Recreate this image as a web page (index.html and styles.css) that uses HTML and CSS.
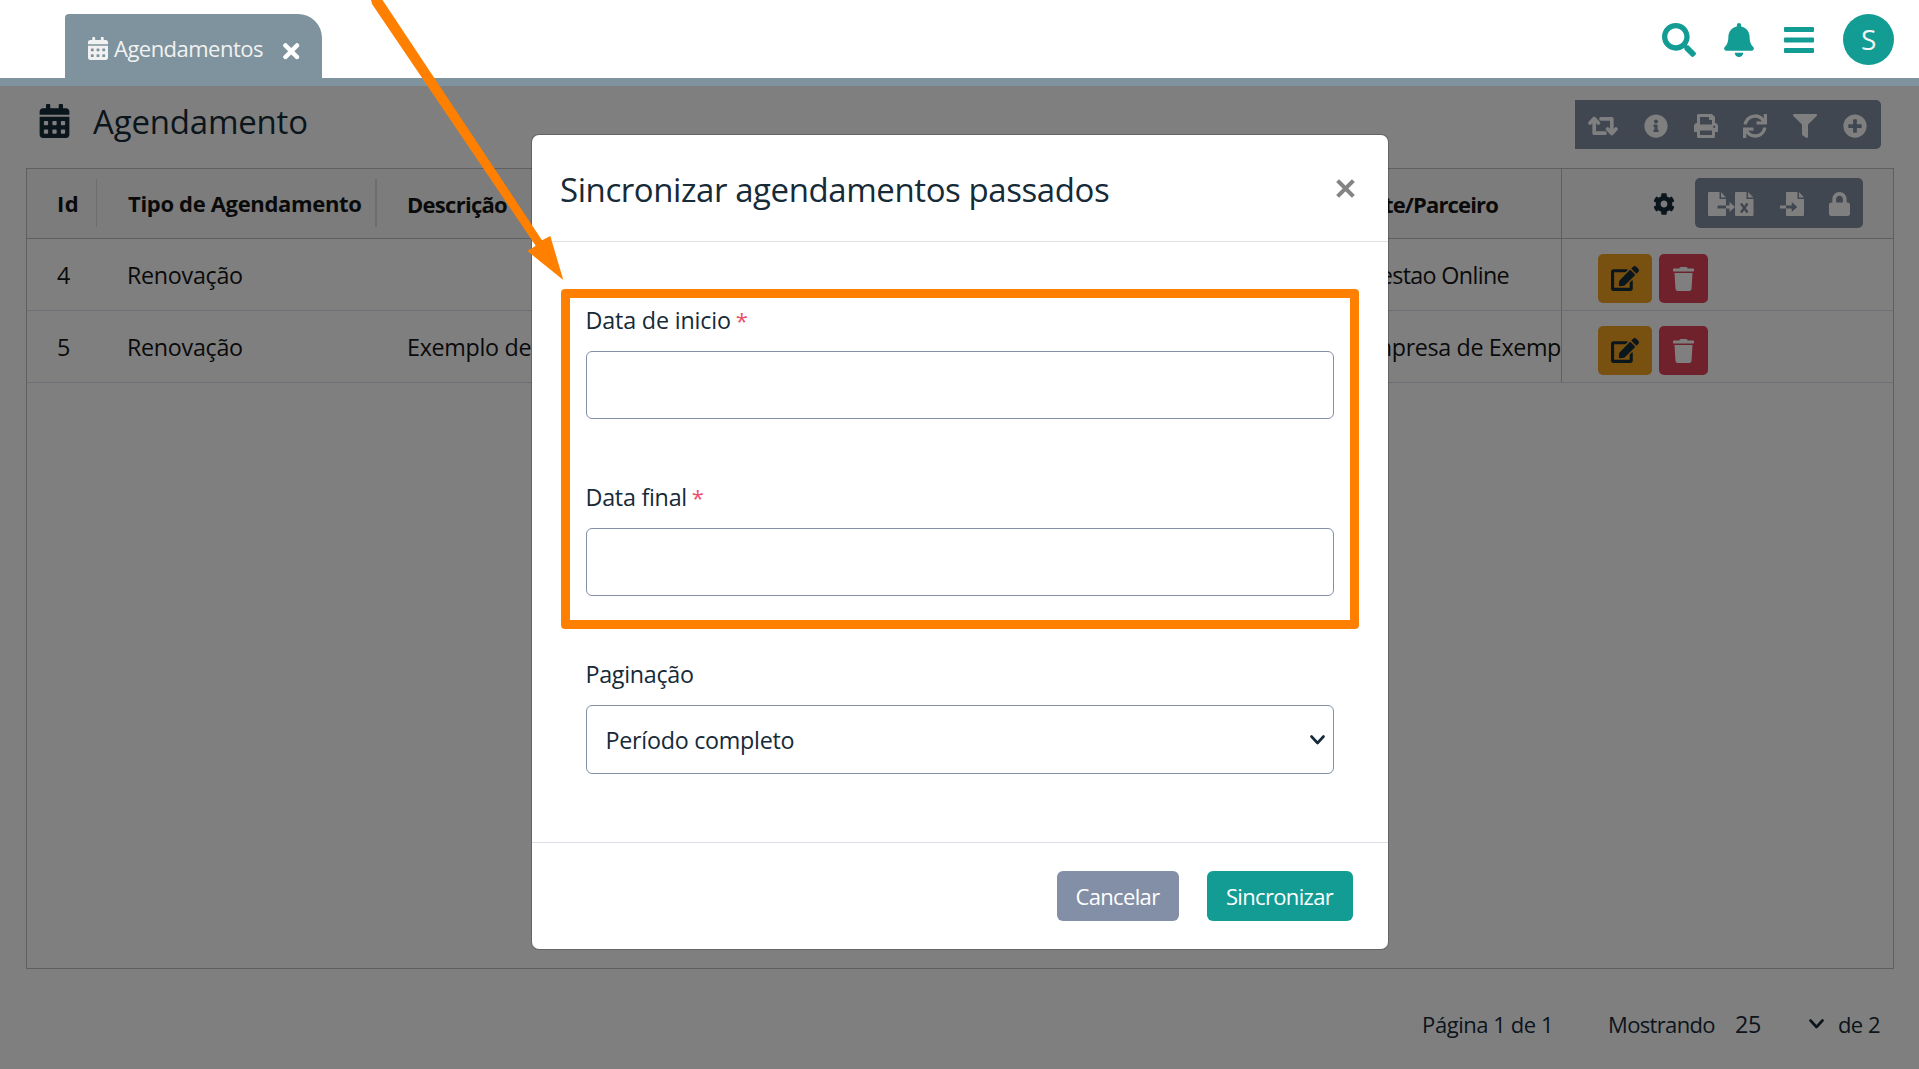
FILE: index.html
```html
<!DOCTYPE html>
<html lang="pt-BR">
<head>
<meta charset="utf-8">
<title>Agendamentos</title>
<link rel="stylesheet" href="styles.css">
</head>
<body>
<svg class="defs" aria-hidden="true">
  <symbol id="i-calendar" viewBox="0 0 448 512"><path d="M0 464c0 26.500 21.500 48 48 48h352c26.500 0 48-21.500 48-48V192H0v272zm320-196c0-6.600 5.400-12 12-12h40c6.600 0 12 5.400 12 12v40c0 6.600-5.400 12-12 12h-40c-6.600 0-12-5.400-12-12v-40zm0 128c0-6.600 5.400-12 12-12h40c6.600 0 12 5.400 12 12v40c0 6.600-5.400 12-12 12h-40c-6.600 0-12-5.400-12-12v-40zM192 268c0-6.600 5.400-12 12-12h40c6.600 0 12 5.400 12 12v40c0 6.600-5.400 12-12 12h-40c-6.600 0-12-5.400-12-12v-40zm0 128c0-6.600 5.400-12 12-12h40c6.600 0 12 5.400 12 12v40c0 6.600-5.400 12-12 12h-40c-6.600 0-12-5.400-12-12v-40zM64 268c0-6.600 5.400-12 12-12h40c6.600 0 12 5.400 12 12v40c0 6.600-5.400 12-12 12H76c-6.600 0-12-5.400-12-12v-40zm0 128c0-6.600 5.400-12 12-12h40c6.600 0 12 5.400 12 12v40c0 6.600-5.400 12-12 12H76c-6.600 0-12-5.400-12-12v-40zM400 64h-48V16c0-8.800-7.200-16-16-16h-32c-8.800 0-16 7.200-16 16v48H160V16c0-8.800-7.200-16-16-16h-32c-8.800 0-16 7.200-16 16v48H48C21.500 64 0 85.500 0 112v48h448v-48c0-26.500-21.500-48-48-48z"/></symbol>
  <symbol id="i-times" viewBox="0 80 352 352"><path d="M242.720 256l100.070-100.070c12.280-12.280 12.280-32.190 0-44.480l-22.240-22.240c-12.280-12.280-32.190-12.280-44.480 0L176 189.280 75.930 89.210c-12.280-12.280-32.190-12.280-44.480 0L9.210 111.450c-12.280 12.280-12.280 32.190 0 44.480L109.280 256 9.210 356.070c-12.280 12.280-12.280 32.190 0 44.480l22.240 22.240c12.280 12.280 32.200 12.280 44.480 0L176 322.720l100.070 100.070c12.280 12.280 32.200 12.280 44.480 0l22.240-22.240c12.280-12.280 12.280-32.190 0-44.480L242.720 256z"/></symbol>
  <symbol id="i-edit" viewBox="0 0 576 512"><path d="M402.600 83.200l90.200 90.200c3.800 3.800 3.800 10 0 13.800L274.400 405.600l-92.800 10.300c-12.400 1.400-22.900-9.100-21.500-21.500l10.300-92.800L388.800 83.200c3.800-3.800 10-3.800 13.800 0zm162-22.900l-48.800-48.800c-15.200-15.200-39.900-15.200-55.200 0l-35.400 35.400c-3.800 3.800-3.800 10 0 13.800l90.200 90.200c3.800 3.800 10 3.800 13.800 0l35.400-35.400c15.200-15.300 15.200-40 0-55.200zM384 346.200V448H64V128h229.800c3.200 0 6.200-1.300 8.500-3.500l40-40c7.600-7.600 2.200-20.500-8.500-20.500H48C21.500 64 0 85.500 0 112v352c0 26.500 21.500 48 48 48h352c26.500 0 48-21.500 48-48V306.200c0-10.700-12.900-16-20.500-8.500l-40 40c-2.200 2.300-3.500 5.300-3.500 8.500z"/></symbol>
  <symbol id="i-trash" viewBox="0 0 448 512"><path d="M432 32H312l-9.400-18.700A24 24 0 0 0 281.100 0H166.800a23.720 23.720 0 0 0-21.400 13.300L136 32H16A16 16 0 0 0 0 48v32a16 16 0 0 0 16 16h416a16 16 0 0 0 16-16V48a16 16 0 0 0-16-16zM53.200 467a48 48 0 0 0 47.900 45h245.800a48 48 0 0 0 47.900-45L416 128H32z"/></symbol>
</svg>

<header class="topbar">
  <div class="tab">
    <svg class="tab-icon"><use href="#i-calendar"/></svg>
    <span class="tab-label">Agendamentos</span>
    <svg class="tab-close"><use href="#i-times"/></svg>
  </div>
  <nav class="top-actions">
    <svg class="ico-search" viewBox="0 0 512 512"><path d="M505 442.700L405.300 343c-4.500-4.500-10.600-7-17-7H372c27.600-35.300 44-79.700 44-128C416 93.100 322.900 0 208 0S0 93.100 0 208s93.100 208 208 208c48.300 0 92.700-16.400 128-44v16.300c0 6.400 2.500 12.500 7 17l99.700 99.700c9.400 9.400 24.600 9.400 33.900 0l28.300-28.300c9.400-9.400 9.400-24.600.1-34zM208 336c-70.700 0-128-57.200-128-128 0-70.700 57.200-128 128-128 70.700 0 128 57.200 128 128 0 70.700-57.200 128-128 128z"/></svg>
    <svg class="ico-bell" viewBox="0 0 448 512"><path d="M224 512c35.320 0 63.970-28.650 63.970-64H160.030c0 35.350 28.650 64 63.970 64zm215.390-149.710c-19.320-20.760-55.470-51.990-55.470-154.290 0-77.700-54.480-139.900-127.940-155.160V32c0-17.670-14.320-32-31.980-32s-31.980 14.330-31.980 32v20.840C118.560 68.100 64.080 130.300 64.080 208c0 102.300-36.150 133.530-55.470 154.290-6 6.450-8.660 14.160-8.610 21.710.11 16.400 12.980 32 32.100 32h383.800c19.120 0 32-15.600 32.100-32 .05-7.550-2.610-15.270-8.610-21.710z"/></svg>
    <svg class="ico-bars" viewBox="0 0 30 26"><path d="M1 0h28a1 1 0 0 1 1 1v3a1 1 0 0 1-1 1H1a1 1 0 0 1-1-1V1a1 1 0 0 1 1-1zM1 10.500h28a1 1 0 0 1 1 1v3a1 1 0 0 1-1 1H1a1 1 0 0 1-1-1v-3a1 1 0 0 1 1-1zM1 21h28a1 1 0 0 1 1 1v3a1 1 0 0 1-1 1H1a1 1 0 0 1-1-1v-3a1 1 0 0 1 1-1z"/></svg>
    <span class="avatar">S</span>
  </nav>
</header>

<main class="page">
  <div class="page-head">
    <h1 class="page-title"><svg class="title-icon"><use href="#i-calendar"/></svg><span class="title-text">Agendamento</span></h1>
    <div class="toolbar">
      <svg class="t-retweet" viewBox="0 0 30 20"><g fill="none" stroke="currentColor" stroke-width="3.700" stroke-linecap="round" stroke-linejoin="round"><path d="M2 7l4.200-4.500L10.400 7M6.200 3.500v13.700H17"/><path d="M28 13l-4.200 4.500L19.600 13M23.800 16.500V2.800H13"/></g></svg>
      <svg class="t24" viewBox="0 0 512 512"><path d="M256 8C119.043 8 8 119.083 8 256c0 136.997 111.043 248 248 248s248-111.003 248-248C504 119.083 392.957 8 256 8zm0 110c23.196 0 42 18.804 42 42s-18.804 42-42 42-42-18.804-42-42 18.804-42 42-42zm56 254c0 6.627-5.373 12-12 12h-88c-6.627 0-12-5.373-12-12v-24c0-6.627 5.373-12 12-12h12v-64h-12c-6.627 0-12-5.373-12-12v-24c0-6.627 5.373-12 12-12h64c6.627 0 12 5.373 12 12v100h12c6.627 0 12 5.373 12 12v24z"/></svg>
      <svg class="t24" viewBox="0 0 512 512"><path d="M448 192V77.250c0-8.490-3.370-16.620-9.370-22.630L393.370 9.370c-6-6-14.140-9.370-22.630-9.370H96C78.330 0 64 14.330 64 32v160c-35.350 0-64 28.650-64 64v112c0 8.840 7.160 16 16 16h48v96c0 17.670 14.330 32 32 32h320c17.670 0 32-14.330 32-32v-96h48c8.840 0 16-7.160 16-16V256c0-35.350-28.650-64-64-64zm-64 256H128v-96h256v96zm0-224H128V64h192v48c0 8.840 7.160 16 16 16h48v96zm48 72c-13.250 0-24-10.750-24-24 0-13.260 10.750-24 24-24s24 10.740 24 24c0 13.250-10.750 24-24 24z"/></svg>
      <svg class="t24" viewBox="0 0 512 512"><path d="M440.650 12.570l4 82.770A247.160 247.160 0 0 0 255.830 8C134.730 8 33.910 94.920 12.290 209.820A12 12 0 0 0 24.090 224h49.050a12 12 0 0 0 11.670-9.260 175.910 175.910 0 0 1 317-56.940l-101.460-4.860a12 12 0 0 0-12.570 12v47.410a12 12 0 0 0 12 12H500a12 12 0 0 0 12-12V12a12 12 0 0 0-12-12h-47.370a12 12 0 0 0-11.980 12.570zM255.830 432a175.610 175.610 0 0 1-146-77.800l101.800 4.870a12 12 0 0 0 12.570-12v-47.400a12 12 0 0 0-12-12H12a12 12 0 0 0-12 12V500a12 12 0 0 0 12 12h47.350a12 12 0 0 0 12-12.600l-4.150-82.570A247.170 247.170 0 0 0 255.830 504c121.110 0 221.930-86.920 243.550-201.820a12 12 0 0 0-11.800-14.180h-49.050a12 12 0 0 0-11.670 9.260A175.860 175.860 0 0 1 255.830 432z"/></svg>
      <svg class="t24" viewBox="0 0 512 512"><path d="M487.976 0H24.028C2.710 0-8.047 25.866 7.058 40.971L192 225.941V432c0 7.831 3.821 15.170 10.237 19.662l80 55.980C298.020 518.690 320 507.493 320 487.980V225.941l184.947-184.970C520.021 25.896 509.338 0 487.976 0z"/></svg>
      <svg class="t24" viewBox="0 0 512 512"><path d="M256 8C119 8 8 119 8 256s111 248 248 248 248-111 248-248S393 8 256 8zm144 276c0 6.600-5.400 12-12 12h-92v92c0 6.600-5.400 12-12 12h-56c-6.600 0-12-5.400-12-12v-92h-92c-6.600 0-12-5.400-12-12v-56c0-6.600 5.400-12 12-12h92v-92c0-6.600 5.400-12 12-12h56c6.600 0 12 5.400 12 12v92h92c6.600 0 12 5.400 12 12v56z"/></svg>
    </div>
  </div>

  <section class="table">
    <div class="row head">
      <div class="cell c-id"><span class="h-id">Id</span></div>
      <div class="cell c-type"><span class="h-type">Tipo de Agendamento</span></div>
      <div class="cell c-desc"><span class="h-desc">Descrição</span></div>
      <div class="cell c-client h-client">Cliente/Parceiro</div>
      <div class="cell c-actions">
        <svg class="gear" viewBox="0 0 512 512"><path d="M487.400 315.700l-42.600-24.600c4.300-23.200 4.300-47 0-70.200l42.600-24.600c4.900-2.800 7.100-8.600 5.500-14-11.100-35.600-30-67.800-54.700-94.600-3.800-4.100-10-5.100-14.800-2.300L380.800 110c-17.900-15.400-38.500-27.300-60.800-35.100V25.800c0-5.600-3.900-10.500-9.400-11.700-36.700-8.200-74.300-7.800-109.200 0-5.500 1.200-9.400 6.100-9.400 11.700V75c-22.200 7.900-42.800 19.800-60.800 35.100L88.700 85.500c-4.900-2.800-11-1.900-14.800 2.300-24.700 26.700-43.600 58.900-54.700 94.600-1.700 5.400.6 11.200 5.500 14L67.300 221c-4.300 23.200-4.300 47 0 70.200l-42.600 24.600c-4.900 2.800-7.100 8.600-5.500 14 11.100 35.600 30 67.800 54.700 94.600 3.800 4.100 10 5.100 14.800 2.300l42.600-24.600c17.900 15.400 38.500 27.300 60.800 35.100v49.200c0 5.600 3.900 10.500 9.400 11.700 36.700 8.200 74.300 7.800 109.200 0 5.500-1.200 9.400-6.100 9.400-11.700v-49.200c22.200-7.900 42.800-19.800 60.800-35.100l42.600 24.600c4.900 2.800 11 1.900 14.800-2.300 24.700-26.700 43.600-58.900 54.700-94.600 1.500-5.500-.7-11.300-5.600-14.100zM256 336c-44.100 0-80-35.900-80-80s35.900-80 80-80 80 35.900 80 80-35.900 80-80 80z"/></svg>
        <div class="file-tools">
          <svg class="f-export" viewBox="0 0 46 24"><path d="M1 0h10.500v7H18v6.500H9.500v3H18V23a1 1 0 0 1-1 1H1a1 1 0 0 1-1-1V1a1 1 0 0 1 1-1zM13 0l5 5.500h-5zM18 13.500h3.500V10L27 15l-5.500 5v-3.500H18zM28 0h10.500v7H45.500v16a1 1 0 0 1-1 1H28a1 1 0 0 1-1-1V1a1 1 0 0 1 1-1zM40 0l5.500 5.500H40z"/><path class="cut" d="M33 11.500l6.500 9M39.500 11.500l-6.500 9"/></svg>
          <svg class="t24" viewBox="0 0 24 24"><path d="M7 0h10.500v7H24v16a1 1 0 0 1-1 1H7a1 1 0 0 1-1-1v-6.500h5.700V20l5.600-5-5.600-5v3.500H6V1a1 1 0 0 1 1-1zM19 0l5 5.500h-5zM.7 13.500H6v3H.7A.7.7 0 0 1 0 15.800v-1.600a.7.7 0 0 1 .7-.7z"/></svg>
          <svg class="f-lock" viewBox="0 0 448 512"><path d="M400 224h-24v-72C376 68.200 307.800 0 224 0S72 68.200 72 152v72H48c-26.500 0-48 21.500-48 48v192c0 26.500 21.500 48 48 48h352c26.500 0 48-21.500 48-48V272c0-26.500-21.500-48-48-48zm-104 0H152v-72c0-39.700 32.300-72 72-72s72 32.300 72 72v72z"/></svg>
        </div>
      </div>
    </div>
    <div class="row">
      <div class="cell c-id">4</div>
      <div class="cell c-type">Renovação</div>
      <div class="cell c-desc"></div>
      <div class="cell c-client v-first">Gestao Online</div>
      <div class="cell c-actions">
        <button class="btn-edit"><svg class="e-icon"><use href="#i-edit"/></svg></button>
        <button class="btn-del"><svg class="d-icon"><use href="#i-trash"/></svg></button>
      </div>
    </div>
    <div class="row">
      <div class="cell c-id">5</div>
      <div class="cell c-type">Renovação</div>
      <div class="cell c-desc">Exemplo de</div>
      <div class="cell c-client v-second">Empresa de Exemp</div>
      <div class="cell c-actions">
        <button class="btn-edit"><svg class="e-icon"><use href="#i-edit"/></svg></button>
        <button class="btn-del"><svg class="d-icon"><use href="#i-trash"/></svg></button>
      </div>
    </div>
  </section>

  <footer class="pager">
    <span class="p-page">Página 1 de 1</span>
    <span class="p-show">Mostrando</span>
    <span class="p-size">25</span>
    <svg class="p-chev" viewBox="0 0 15 10"><path d="M1.500 1.500l6 6.500 6-6.500"/></svg>
    <span class="p-total">de 2</span>
  </footer>
</main>

<div class="backdrop"></div>

<div class="modal">
  <div class="modal-head">
    <h2 class="modal-title">Sincronizar agendamentos passados</h2>
    <svg class="modal-close" viewBox="0 0 20 20"><path d="M1.700 1.700l16.600 16.600M18.300 1.700L1.700 18.300"/></svg>
  </div>
  <div class="modal-body">
    <div class="field">
      <label class="l-start">Data de inicio <span class="req">*</span></label>
      <div class="input"></div>
    </div>
    <div class="field">
      <label class="l-end">Data final <span class="req">*</span></label>
      <div class="input"></div>
    </div>
    <div class="field">
      <label class="l-page">Paginação</label>
      <div class="input select"><span>Período completo</span><svg class="chev" viewBox="0 0 15 10"><path d="M1.500 1.500l6 6.500 6-6.500"/></svg></div>
    </div>
  </div>
  <div class="modal-foot">
    <button class="btn cancel">Cancelar</button>
    <button class="btn sync">Sincronizar</button>
  </div>
</div>

<div class="highlight"></div>
<svg class="arrow" viewBox="0 0 600 300"><path d="M371 0H382.500L542 240.300 550.300 236 563.300 280 527.300 251 535.700 245.700 372 4Z"/></svg>
</body>
</html>
```
FILE: styles.css
```css
* { box-sizing: border-box; }
body {
  margin: 0;
  width: 1919px;
  height: 1069px;
  position: relative;
  overflow: hidden;
  background: #fff;
  color: #162a38;
  font-family: "Open Sans", "Noto Sans", sans-serif;
  font-size: 23.3px;
  letter-spacing: -0.3px;
  line-height: 34px;
  white-space: nowrap;
}
svg { display: block; flex: none; fill: currentColor; }
.defs { position: absolute; width: 0; height: 0; }
h1, h2 { margin: 0; font-weight: 400; }
button { border: 0; padding: 0; font: inherit; }

.topbar {
  display: flex;
  justify-content: space-between;
  align-items: flex-end;
  height: 86px;
  border-bottom: 8px solid #7e939d;
  padding: 0 25px 0 65px;
}
.tab {
  display: flex;
  align-items: center;
  width: 257px;
  height: 64px;
  padding: 5px 0 0 23px;
  border-radius: 4px 24px 0 0;
  background: #7e939d;
  color: #f1f1f1;
  font-size: 22px;
  letter-spacing: -0.52px;
}
.tab-icon { width: 20px; height: 23px; margin-right: 6px; }
.tab-label { width: 169px; padding-bottom: 2px; }
.tab-close { width: 16.5px; height: 16.5px; margin-top: 6px; color: #fff; }
.top-actions {
  display: flex;
  align-items: center;
  height: 77px;
  align-self: flex-start;
  padding-top: 3px;
  color: #129c94;
}
.ico-search { width: 34px; height: 34px; margin-right: 28px; }
.ico-bell { width: 30px; height: 34px; margin-right: 30px; }
.ico-bars { width: 30px; height: 26px; margin-right: 29px; }
.avatar {
  width: 51px;
  height: 51px;
  margin-bottom: 2px;
  border-radius: 50%;
  background: #129c94;
  color: #f4f4f4;
  font-size: 28px;
  line-height: 51px;
  text-align: center;
}

.page-head {
  display: flex;
  justify-content: space-between;
  height: 82px;
  padding: 0 38px 0 39px;
}
.page-title {
  display: flex;
  align-items: center;
  height: 70px;
  font-size: 33px;
  letter-spacing: -0.2px;
}
.title-icon { width: 31px; height: 34px; margin-right: 23px; }
.title-text { padding-top: 2px; }
.toolbar {
  display: flex;
  align-items: center;
  gap: 25.8px;
  width: 306px;
  height: 49px;
  margin-top: 14px;
  padding: 2px 0 0 13px;
  border-radius: 0 5px 5px 0;
  background: #808ea2;
  color: #fff;
}
.t24 { width: 24px; height: 24px; }
.t-retweet { width: 30px; height: 20px; }

.table {
  height: 801px;
  margin: 0 25px 0 26px;
  border: 1px solid #bcbec2;
}
.row {
  display: grid;
  grid-template-columns: 70px 280px 900px 284px 1fr;
  height: 72px;
  border-bottom: 1px solid #dcdee8;
  color: #151515;
}
.head {
  height: 70px;
  background: #f9f9f9;
  border-bottom-color: #bcbec2;
  font-size: 22px;
  font-weight: 700;
}
.cell { display: flex; align-items: center; overflow: hidden; }
.c-id { padding-left: 30px; }
.c-type { padding-left: 30px; }
.c-desc { padding-left: 30px; }
.head .c-id, .head .c-type { height: 48px; margin-top: 10px; }
.head .c-id { border-right: 1px solid #dcdcdc; }
.head .c-type { border-right: 2px solid #dcdcdc; letter-spacing: -0.33px; padding-left: 31px; }
.h-id { letter-spacing: 0.4px; }
.head .c-desc { letter-spacing: -0.72px; padding-left: 30px; }
.c-client { justify-content: flex-end; }
.head .h-client { padding: 0 63px 0 0; letter-spacing: -0.85px; }
.v-first { padding-right: 52px; letter-spacing: -0.65px; }
.v-second { padding-right: 0; letter-spacing: -0.37px; }
.c-actions { border-left: 1px solid #bcbec2; padding-left: 36px; gap: 7px; }
.head .c-actions { justify-content: flex-end; padding: 0 30px 1px 0; gap: 20px; }
.gear { width: 22px; height: 22px; margin-top: 2px; color: #162a38; }
.file-tools {
  display: flex;
  align-items: center;
  gap: 25.5px;
  width: 168px;
  height: 50px;
  padding: 2px 0 0 13px;
  border-radius: 5px;
  background: #808ea2;
  color: #fff;
}
.f-export { width: 46px; height: 24px; }
.f-lock { width: 21px; height: 24px; }
.cut { fill: none; stroke: #808ea2; stroke-width: 2.4; }
.btn-edit, .btn-del {
  display: flex;
  align-items: center;
  justify-content: center;
  height: 49px;
  margin-top: 8px;
  border-radius: 5px;
}
.btn-edit { width: 54px; background: #f0a020; color: #162a38; }
.btn-del { width: 49px; background: #e04458; color: #fff; }
.e-icon { width: 28px; height: 25px; }
.d-icon { width: 21px; height: 24px; }

.pager {
  display: flex;
  justify-content: flex-end;
  align-items: center;
  height: 100px;
  padding: 9px 39px 0 0;
  font-size: 22px;
}
.p-page { margin-right: 55px; letter-spacing: -0.45px; }
.p-show { margin-right: 20px; letter-spacing: -0.66px; }
.p-size { margin-right: 48px; font-size: 23.3px; }
.p-chev { width: 15px; height: 10px; margin-right: 14px; }
.p-total { letter-spacing: -0.51px; }
.p-chev, .chev { fill: none; stroke: #162a38; stroke-width: 2.6; stroke-linecap: round; stroke-linejoin: round; }

.backdrop { position: absolute; inset: 86px 0 0 0; background: rgba(0, 0, 0, 0.5); }

.modal {
  position: absolute;
  left: 532px;
  top: 135px;
  width: 856px;
  height: 814px;
  border-radius: 7px;
  background: #fff;
  box-shadow: 0 0 0 1px rgba(0, 0, 0, 0.2);
}
.modal-head {
  display: flex;
  align-items: center;
  justify-content: space-between;
  height: 107px;
  padding: 2px 33px 0 28px;
  border-bottom: 1px solid #dee0e3;
}
.modal-title { padding-top: 2px; font-size: 33px; letter-spacing: -0.42px; }
.modal-close { width: 19px; height: 19px; margin-bottom: 2px; fill: none; stroke: #848484; stroke-width: 4.4; }
.modal-body { height: 601px; padding: 61px 54px 0; border-bottom: 1px solid #dcdde6; }
.field { margin-bottom: 61px; }
.field label { display: block; height: 34px; margin: 0 0 14px -0.5px; }
.l-start { letter-spacing: -0.16px; }
.l-end { letter-spacing: -0.25px; }
.l-page { letter-spacing: -0.3px; }
.req { margin-left: -1px; font-size: 22px; color: #e9506a; }
.input { height: 68px; border: 1px solid #838fa6; border-radius: 6px; }
.select {
  display: flex;
  align-items: center;
  justify-content: space-between;
  height: 69px;
  padding: 0 8px 0 18.5px;
  letter-spacing: -0.27px;
}
.chev { width: 15px; height: 10px; }
.modal-foot { display: flex; justify-content: flex-end; gap: 28px; padding: 28px 35px 0 0; }
.btn { height: 50px; padding-right: 1px; border-radius: 6px; color: #fff; font-size: 22px; letter-spacing: -0.66px; }
.cancel { width: 122px; background: #838fa6; }
.sync { width: 146px; background: #129c94; }

.highlight {
  position: absolute;
  left: 561px;
  top: 289px;
  width: 798px;
  height: 340px;
  border: 9px solid #ff8000;
  border-radius: 4px;
}
.arrow { position: absolute; left: 0; top: 0; width: 600px; height: 300px; fill: #ff8000; }
```
